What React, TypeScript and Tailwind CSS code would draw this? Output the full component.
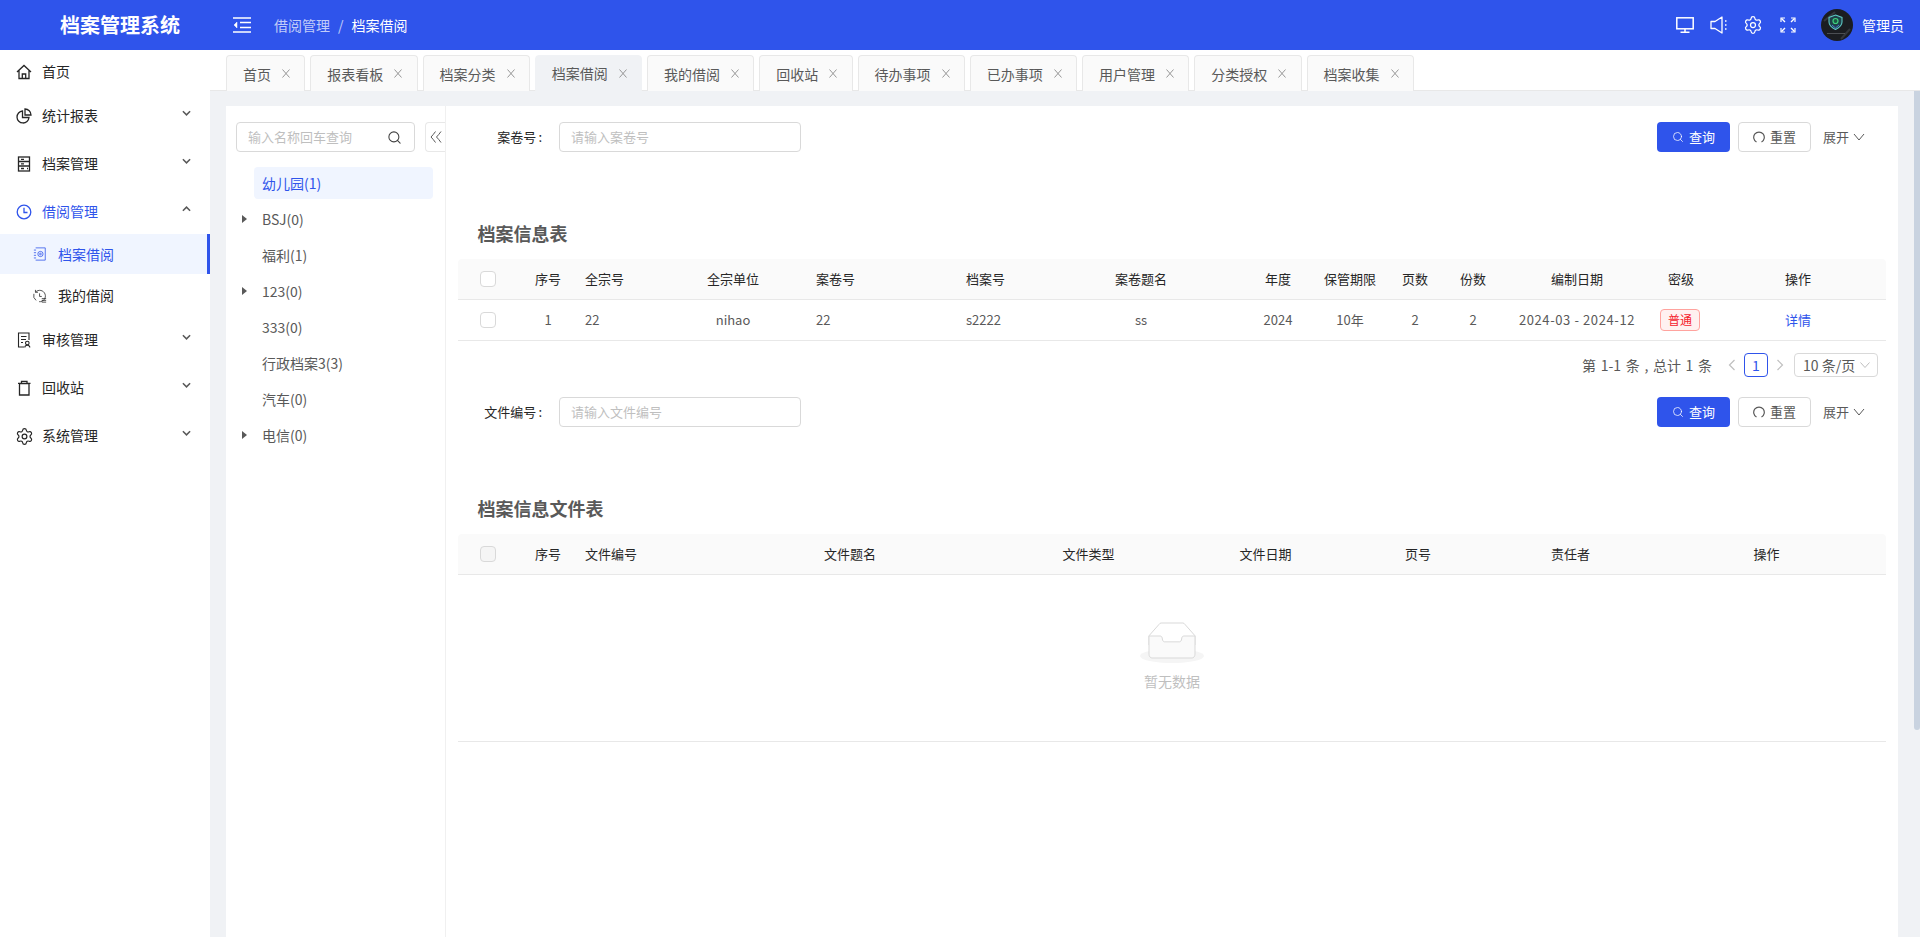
import type { ReactNode } from "react";
import { Search, Settings } from "lucide-react";

const font = { fontFamily: '"Noto Sans CJK SC", "Noto Sans", sans-serif' };

const tabs = ["首页", "报表看板", "档案分类", "档案借阅", "我的借阅", "回收站", "待办事项", "已办事项", "用户管理", "分类授权", "档案收集"];

const tree = [
  { label: "幼儿园(1)", selected: true },
  { label: "BSJ(0)", caret: true },
  { label: "福利(1)" },
  { label: "123(0)", caret: true },
  { label: "333(0)" },
  { label: "行政档案3(3)" },
  { label: "汽车(0)" },
  { label: "电信(0)", caret: true },
];

function Ico({ children, className = "w-4 h-4", weight = 1.3 }: { children: ReactNode; className?: string; weight?: number }) {
  return (
    <svg viewBox="0 0 16 16" fill="none" stroke="currentColor" strokeWidth={weight} className={`shrink-0 ${className}`}>
      {children}
    </svg>
  );
}

function Chevron({ up }: { up?: boolean }) {
  return (
    <svg viewBox="0 0 10 6" fill="none" stroke="#595959" strokeWidth="1.7" className={`ml-auto mr-[19px] -mt-[7px] w-[9px] h-[6px] ${up ? "rotate-180" : ""}`}>
      <path d="M1 1l4 4 4-4" />
    </svg>
  );
}

function MenuItem({ icon, label, arrow, active, className = "" }: { icon: ReactNode; label: string; arrow?: boolean; active?: boolean; className?: string }) {
  return (
    <div className={`flex h-10 items-center pl-4 text-sm ${active ? "text-[#2f54eb]" : "text-[#262626]"} ${className}`}>
      {icon}
      <span className="mb-[2px] ml-[10px]">{label}</span>
      {arrow && <Chevron up={active} />}
    </div>
  );
}

function Sidebar() {
  return (
    <aside className="w-[210px] shrink-0 bg-white pt-[2px]">
      <MenuItem
        label="首页"
        icon={
          <Ico>
            <path d="M1 8l7-6.5L15 8M3 6.5v8h10v-8M6.3 14.5V10h3.4v4.5" />
          </Ico>
        }
      />
      <MenuItem
        className="mt-1"
        label="统计报表"
        arrow
        icon={
          <Ico>
            <path d="M6.5 3A6 6 0 1 0 13 9.500H6.500Z" />
            <path d="M9 1a6 6 0 0 1 6 6H9Z" />
          </Ico>
        }
      />
      <MenuItem
        className="mt-2"
        label="档案管理"
        arrow
        icon={
          <Ico>
            <rect x="2.500" y="1" width="11" height="14" />
            <path d="M2.500 5.500h11M2.500 10h11M5 3.300h3M5 7.800h3M5 12.500h3M11 12.500h1" />
          </Ico>
        }
      />
      <MenuItem
        className="mt-2"
        label="借阅管理"
        arrow
        active
        icon={
          <Ico>
            <circle cx="8" cy="8" r="6.800" />
            <path d="M8 3.800v4.700h3.500" />
          </Ico>
        }
      />
      <div className="mt-[2px] flex h-10 items-center border-r-[3px] border-[#2f54eb] bg-[#f0f5ff] pl-[33px] text-sm text-[#2f54eb]">
        <Ico className="w-[14px] h-4" weight={0.9}>
          <path d="M3 1h11v14H3M1 3.500h2.500M1 6.500h2.500M1 9.500h2.500M1 12.500h2.500" />
          <circle cx="8.500" cy="8" r="3" />
          <circle cx="8.500" cy="8" r="1" />
        </Ico>
        <span className="ml-[11px]">档案借阅</span>
      </div>
      <div className="mt-[2px] flex h-10 items-center pl-[33px] text-sm text-[#262626]">
        <Ico className="w-[14px] h-4" weight={0.9}>
          <path d="M3 3.500A6.500 6.500 0 1 1 7 14.500M1 5.500A7 7 0 0 0 3.500 13M2.800 1v2.800h2.800M7.500 5v3.500h2.500M10 11h5M10 13h5M10 15h5" />
        </Ico>
        <span className="mb-[2px] ml-[11px]">我的借阅</span>
      </div>
      <MenuItem
        className="mt-1"
        label="审核管理"
        arrow
        icon={
          <Ico weight={1.1}>
            <path d="M8 15H2.500V1h10.500v7M5 4.500h5.500M5 7.500h5M5 10.500h2" />
            <circle cx="11.300" cy="11" r="1.800" />
            <path d="M8.800 15.500c0-3 5-3 5 0" />
          </Ico>
        }
      />
      <MenuItem
        className="mt-2"
        label="回收站"
        arrow
        icon={
          <Ico>
            <path d="M3.500 3.500h9.500v11.500h-9.500ZM2 3.300h12.500M5.500 3V1.300h5.500V3" strokeWidth="1.300" />
          </Ico>
        }
      />
      <MenuItem
        className="mt-2"
        label="系统管理"
        arrow
        icon={<Settings size={19} strokeWidth={1.5} className="-mx-[1.5px] shrink-0" />}
      />
    </aside>
  );
}

function Header() {
  return (
    <header className="flex h-[50px] shrink-0 items-center bg-[#2f54eb] text-white">
      <div className="w-[210px] pl-[60px] text-[20px] font-bold">档案管理系统</div>
      <svg viewBox="0 0 18 16" fill="none" stroke="currentColor" strokeWidth="1.500" className="ml-[23px] h-4 w-[18px]">
        <path d="M0 1h18M7 5.500h11M7 10.500h11M0 15h18" />
        <path d="M4 5L1 8l3 3Z" fill="currentColor" strokeWidth="0.500" />
      </svg>
      <div className="ml-[23px] flex items-center text-sm">
        <span className="opacity-70">借阅管理</span>
        <span className="mx-[8px] opacity-70">/</span>
        <span>档案借阅</span>
      </div>
      <div className="ml-auto flex items-center pr-4">
        <svg viewBox="0 0 18 16" fill="none" stroke="currentColor" strokeWidth="1.500" className="h-4 w-[18px]">
          <rect x="0.800" y="0.800" width="16.400" height="11" />
          <path d="M9 12v3M4.500 15.200h9" />
        </svg>
        <svg viewBox="0 0 18 18" fill="none" stroke="currentColor" strokeWidth="1.300" className="ml-4 h-[18px] w-[18px]">
          <path d="M12 1v16L5 12.500H1v-7h4Z" strokeLinejoin="round" />
          <path d="M15 5h1.500M15 9h1.500M15 13h1.500" strokeWidth="1.500" />
        </svg>
        <Settings size={20} strokeWidth={1.500} className="ml-[15px]" />
        <svg viewBox="0 0 16 16" fill="none" stroke="currentColor" strokeWidth="1.400" className="ml-[17px] h-4 w-4">
          <path d="M1.500 1.500l3.500 3.500M14.500 1.500L11 5M1.500 14.500L5 11M14.500 14.500L11 11" />
          <path d="M1 5V1h4M11 1h4v4M1 11v4h4M15 11v4h-4" strokeWidth="1.200" />
        </svg>
        <svg viewBox="0 0 32 32" className="ml-[25px] h-8 w-8 shrink-0">
          <circle cx="16" cy="16" r="16" fill="#1b1d21" />
          <path d="M3 12L14 3M20 30l9-10" stroke="#34373d" strokeWidth="2" />
          <path d="M14.500 6l6.500 2.500v4.500c0 3.500-2.500 5.500-6.500 7.500-4-2-6.500-4-6.500-7.500V8.500Z" fill="#1d4048" stroke="#5ec8c4" strokeWidth="1.100" />
          <circle cx="14.500" cy="12" r="2.500" fill="#1a5a45" stroke="#3fd07f" strokeWidth="1.200" />
          <path d="M11 16l3.500 3 3.500-3" fill="none" stroke="#4f7fe0" strokeWidth="0.900" />
          <path d="M6 24.500h18" stroke="#6d7075" strokeWidth="0.600" />
        </svg>
        <span className="ml-[9px] text-sm">管理员</span>
      </div>
    </header>
  );
}

function Tabs() {
  return (
    <div className="flex h-[41px] shrink-0 gap-[5px] border-b border-[#e8e8e8] bg-white pl-4 pt-[5px]">
      {tabs.map((t) => {
        const active = t === "档案借阅";
        return (
          <div
            key={t}
            className={`flex h-[36px] items-center rounded-t border pl-4 pr-[14.25px] text-sm text-[#595959] ${
              active ? "border-[#f0f2f5] bg-[#f0f2f5]" : "h-[35px] border-b-0 border-[#e8e8e8] bg-[#fafafa]"
            }`}
          >
            {t}
            <svg viewBox="0 0 8 9" stroke="#8c8c8c" strokeWidth="0.900" className="ml-[11px] h-[9px] w-2">
              <path d="M0.500 0.500l7 8M7.500 0.500l-7 8" />
            </svg>
          </div>
        );
      })}
    </div>
  );
}

function TreePanel() {
  return (
    <div className="w-[220px] shrink-0 border-r border-[#f0f0f0] pt-4">
      <div className="flex items-start">
        <div className="ml-[10px] flex h-[30px] w-[179px] items-center justify-between rounded border border-[#d9d9d9] pl-[11px] pr-[12px] text-[13px] text-[#bfbfbf]">
          输入名称回车查询
          <Search size={15} strokeWidth={1.700} className="text-[#404040]" />
        </div>
        <div className="ml-auto flex h-[30px] w-5 items-center justify-center rounded-l border border-r-0 border-[#e8e8e8]">
          <svg viewBox="0 0 12 12" fill="none" stroke="#595959" strokeWidth="1" className="h-3 w-3">
            <path d="M5.500 0.500Q3 4 1 6q2 2 4.500 5.500M11 0.500Q8.500 4 6.500 6q2 2 4.500 5.500" />
          </svg>
        </div>
      </div>
      <div className="mt-[15px] flex flex-col gap-1">
        {tree.map((n) => (
          <div key={n.label} className="flex items-center text-sm text-[#595959]">
            <span className="flex w-[28px] justify-end pr-[7px]">
              {n.caret && <span className="h-0 w-0 border-y-[4px] border-l-[5px] border-y-transparent border-l-[#595959]" />}
            </span>
            <span className={`h-8 w-[179px] rounded px-2 leading-8 ${n.selected ? "bg-[#f0f5ff] text-[#2f54eb]" : ""}`}>{n.label}</span>
          </div>
        ))}
      </div>
    </div>
  );
}

function QueryForm({ label, placeholder }: { label: string; placeholder: string }) {
  return (
    <div className="flex h-[30px] items-center text-[13px]">
      <span className="w-[85px] pr-px text-right text-[#262626]">
        {label}
        <span className="ml-[2px]">:</span>
      </span>
      <div className="ml-4 flex h-[30px] w-[242px] items-center rounded border border-[#d9d9d9] pl-[11px] text-[#bfbfbf]">{placeholder}</div>
      <button className="ml-auto flex h-[30px] w-[73px] items-center justify-center gap-[5px] rounded-sm bg-[#2f54eb] text-white">
        <Search size={12} strokeWidth={1.500} />
        查询
      </button>
      <button className="ml-2 flex h-[30px] w-[73px] items-center justify-center gap-[5px] rounded-sm border border-[#d9d9d9] text-[#595959]">
        <svg viewBox="0 0 12 12" fill="none" stroke="currentColor" strokeWidth="1.200" className="h-3 w-3">
          <path d="M3.500 11A5.300 5.300 0 1 1 8.500 11" />
        </svg>
        重置
      </button>
      <span className="ml-3 text-[#595959]">展开</span>
      <svg viewBox="0 0 12 8" fill="none" stroke="#595959" strokeWidth="1" className="ml-[4px] mr-[21px] h-2 w-3">
        <path d="M1 1l5 6 5-6" />
      </svg>
    </div>
  );
}

function Checkbox({ disabled }: { disabled?: boolean }) {
  return <span className={`h-4 w-4 rounded-sm border border-[#d9d9d9] ${disabled ? "bg-[#f5f5f5]" : "bg-white"}`} />;
}

function RecordTable() {
  const cols = "grid-cols-[61px_58px_81px_150px_150px_82px_202px_72px_72px_58px_58px_150px_58px_176px]";
  return (
    <div className="text-[13px]">
      <div className={`grid h-[41px] items-center rounded-t border-b border-[#e8e8e8] bg-[#fafafa] text-center text-[#262626] ${cols}`}>
        <span className="flex justify-center pr-px"><Checkbox /></span>
        <span>序号</span>
        <span className="pl-2 text-left">全宗号</span>
        <span>全宗单位</span>
        <span className="pl-2 text-left">案卷号</span>
        <span className="pl-2 text-left">档案号</span>
        <span>案卷题名</span>
        <span>年度</span>
        <span>保管期限</span>
        <span>页数</span>
        <span>份数</span>
        <span>编制日期</span>
        <span>密级</span>
        <span>操作</span>
      </div>
      <div className={`grid h-[41px] items-center border-b border-[#e8e8e8] text-center text-[#595959] ${cols}`}>
        <span className="flex justify-center pr-px"><Checkbox /></span>
        <span>1</span>
        <span className="pl-2 text-left">22</span>
        <span>nihao</span>
        <span className="pl-2 text-left">22</span>
        <span className="pl-2 text-left">s2222</span>
        <span>ss</span>
        <span>2024</span>
        <span>10年</span>
        <span>2</span>
        <span>2</span>
        <span className="tracking-[0.6px]">2024-03 - 2024-12</span>
        <span className="flex justify-center pr-[2px]">
          <span className="flex h-[22px] items-center rounded border border-[#ffa39e] bg-[#fff1f0] px-[7px] text-xs text-[#f5222d]">普通</span>
        </span>
        <span className="text-[#2f54eb]">详情</span>
      </div>
    </div>
  );
}

function Pagination() {
  return (
    <div className="mt-3 flex h-6 items-center justify-end pr-2 text-sm text-[#595959]">
      <span className="[word-spacing:1.5px]">第 1-1 条 , 总计 1 条</span>
      <svg viewBox="0 0 8 12" fill="none" stroke="#bfbfbf" strokeWidth="1.200" className="ml-4 h-3 w-2">
        <path d="M6.500 1L1.500 6l5 5" />
      </svg>
      <span className="ml-2 flex h-6 w-6 items-center justify-center rounded border border-[#2f54eb] text-[#2f54eb]">1</span>
      <svg viewBox="0 0 8 12" fill="none" stroke="#bfbfbf" strokeWidth="1.200" className="ml-2 h-3 w-2">
        <path d="M1.500 1l5 5-5 5" />
      </svg>
      <span className="ml-[10px] flex h-6 w-[84px] items-center justify-between rounded border border-[#d9d9d9] pl-2 pr-[7px]">
        10 条/页
        <svg viewBox="0 0 10 6" fill="none" stroke="#bfbfbf" strokeWidth="1" className="h-[6px] w-[10px]">
          <path d="M0.500 0.500L5 5.500l4.500-5" />
        </svg>
      </span>
    </div>
  );
}

function FileTable() {
  const cols = "grid-cols-[61px_58px_135px_276px_201px_153px_152px_153px_239px]";
  return (
    <div className="text-[13px]">
      <div className={`grid h-[41px] items-center rounded-t border-b border-[#e8e8e8] bg-[#fafafa] text-center text-[#262626] ${cols}`}>
        <span className="flex justify-center pr-px"><Checkbox disabled /></span>
        <span>序号</span>
        <span className="pl-2 text-left">文件编号</span>
        <span>文件题名</span>
        <span>文件类型</span>
        <span>文件日期</span>
        <span>页号</span>
        <span>责任者</span>
        <span>操作</span>
      </div>
      <div className="flex h-[167px] flex-col items-center border-b border-[#e8e8e8] pt-[47px]">
        <svg viewBox="0 0 64 41" className="h-[41px] w-16">
          <g transform="translate(0 1)" fill="none" fillRule="evenodd">
            <ellipse fill="#f5f5f5" cx="32" cy="33" rx="32" ry="7" />
            <g fillRule="nonzero" stroke="#d9d9d9">
              <path d="M55 12.76L44.854 1.258C44.367.474 43.656 0 42.907 0H21.093c-.749 0-1.46.474-1.947 1.257L9 12.761V22h46v-9.24z" />
              <path
                d="M41.613 15.931c0-1.605.994-2.93 2.227-2.931H55v18.137C55 33.26 53.68 35 52.05 35h-40.1C10.32 35 9 33.259 9 31.137V13h11.16c1.233 0 2.227 1.323 2.227 2.928v.022c0 1.605 1.005 2.901 2.237 2.901h14.752c1.232 0 2.237-1.308 2.237-2.913v-.007z"
                fill="#fafafa"
              />
            </g>
          </g>
        </svg>
        <span className="mt-2 text-sm text-[#bfbfbf]">暂无数据</span>
      </div>
    </div>
  );
}

export default function App() {
  return (
    <div className="flex h-screen flex-col overflow-hidden bg-white" style={font}>
      <Header />
      <div className="flex min-h-0 flex-1">
        <Sidebar />
        <div className="flex min-w-0 flex-1 flex-col">
          <Tabs />
          <div className="flex min-h-0 flex-1 bg-[#f0f2f5]">
            <div className="min-w-0 flex-1 pl-4 pr-4 pt-[15px]">
              <div className="flex h-full bg-white">
                <TreePanel />
                <div className="min-w-0 flex-1 px-3 pt-4">
                  <QueryForm label="案卷号" placeholder="请输入案卷号" />
                  <h2 className="mb-3 mt-[69px] h-[26px] pl-[19.500px] text-[18px] font-bold leading-[24px] text-[#595959]">档案信息表</h2>
                  <RecordTable />
                  <Pagination />
                  <div className="mt-5">
                    <QueryForm label="文件编号" placeholder="请输入文件编号" />
                  </div>
                  <h2 className="mb-3 mt-[69px] h-[26px] pl-[19.500px] text-[18px] font-bold leading-[24px] text-[#595959]">档案信息文件表</h2>
                  <FileTable />
                </div>
              </div>
            </div>
            <div className="w-[6px] shrink-0">
              <div className="h-[639px] rounded-b-sm bg-[#c9d3e0]" />
            </div>
          </div>
        </div>
      </div>
    </div>
  );
}
